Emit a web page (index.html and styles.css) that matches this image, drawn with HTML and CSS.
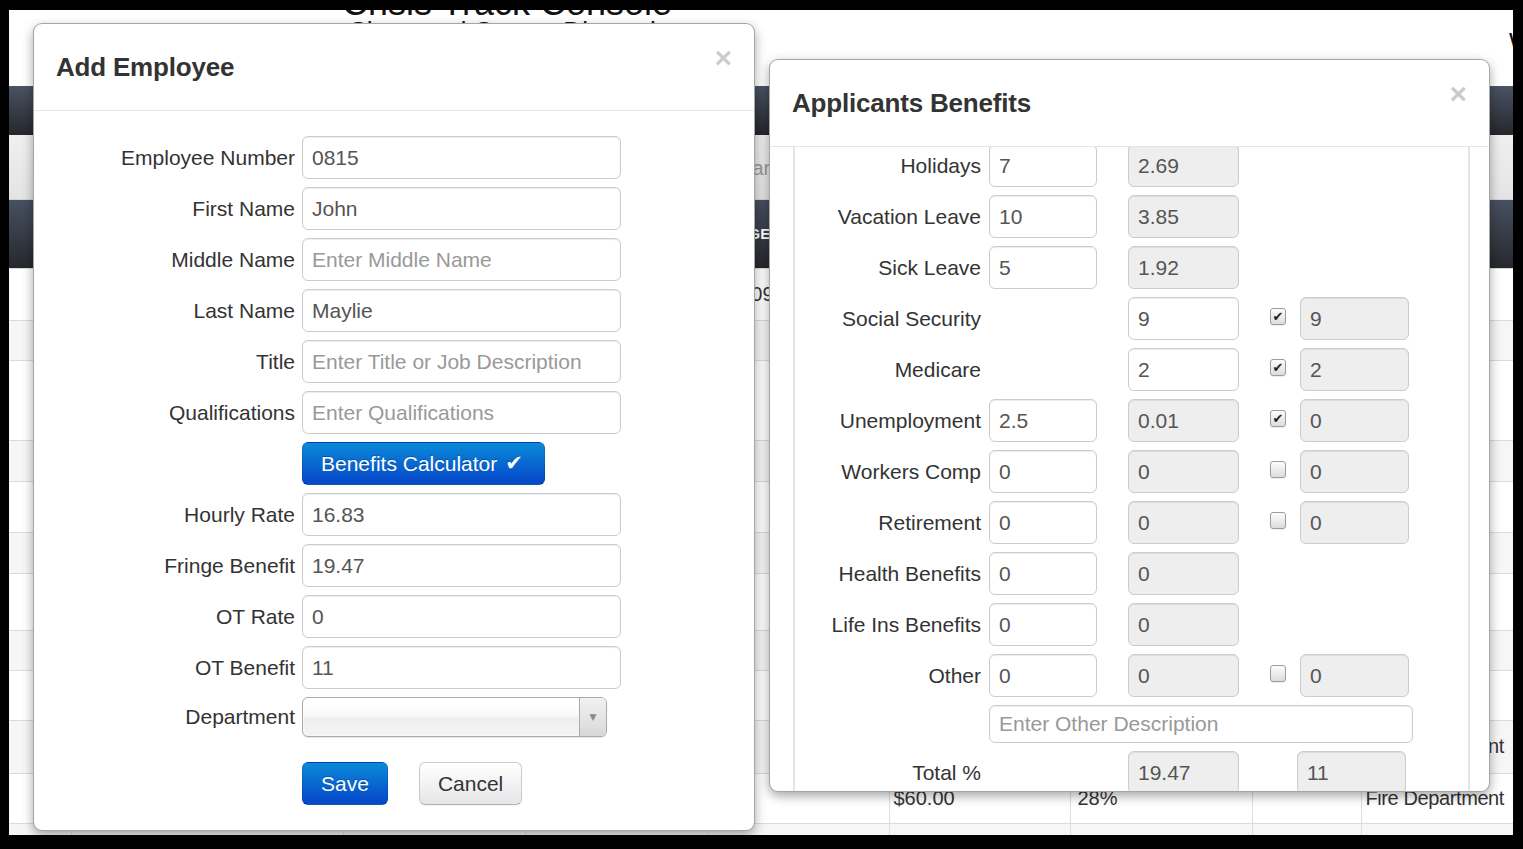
FILE: index.html
```html
<!DOCTYPE html>
<html>
<head>
<meta charset="utf-8">
<title>Crisis Track Console</title>
<link rel="stylesheet" href="styles.css">
</head>
<body>
<div class="screen">
  <div class="page">
    <header class="site-head">
      <div class="brand-block">
        <div class="brand">Crisis Track Console</div>
        <div class="sub">Sherwood County Dispatch</div>
      </div>
      <div class="user">Welcome</div>
    </header>
    <nav class="navbar"></nav>
    <div class="toolbar"><span class="search">Search</span></div>
    <table class="grid">
      <colgroup>
        <col class="w1"><col class="w2"><col class="w3"><col class="w4"><col class="w5"><col class="w6"><col class="w7"><col class="w8"><col class="w9">
      </colgroup>
      <thead>
        <tr><th></th><th>NAME</th><th>TITLE</th><th>DATE</th><th>RANGE</th><th>RATE</th><th>FRINGE</th><th></th><th>DEPARTMENT</th></tr>
      </thead>
      <tbody>
        <tr><td></td><td></td><td></td><td></td><td>12/09/15</td><td></td><td></td><td></td><td></td></tr>
        <tr><td></td><td></td><td></td><td></td><td></td><td></td><td></td><td></td><td></td></tr>
        <tr><td></td><td></td><td></td><td></td><td></td><td></td><td></td><td></td><td></td></tr>
        <tr><td></td><td></td><td></td><td></td><td></td><td></td><td></td><td></td><td></td></tr>
        <tr><td></td><td></td><td></td><td></td><td></td><td></td><td></td><td></td><td></td></tr>
        <tr><td></td><td></td><td></td><td></td><td></td><td></td><td></td><td></td><td></td></tr>
        <tr><td></td><td></td><td></td><td></td><td></td><td></td><td></td><td></td><td></td></tr>
        <tr><td></td><td></td><td></td><td></td><td></td><td></td><td></td><td></td><td></td></tr>
        <tr><td></td><td></td><td></td><td></td><td></td><td></td><td></td><td></td><td></td></tr>
        <tr><td></td><td></td><td></td><td></td><td></td><td></td><td></td><td></td><td>Fire Department</td></tr>
        <tr><td></td><td></td><td></td><td></td><td></td><td>$60.00</td><td>28%</td><td></td><td>Fire Department</td></tr>
        <tr><td></td><td></td><td></td><td></td><td></td><td></td><td></td><td></td><td></td></tr>
      </tbody>
    </table>
  </div>

  <div class="modal modal-left">
    <div class="modal-head">
      <h3>Add Employee</h3>
      <span class="close">&times;</span>
    </div>
    <form class="emp-form">
      <div class="form-row"><label>Employee Number</label><input class="field" type="text" value="0815"></div>
      <div class="form-row"><label>First Name</label><input class="field" type="text" value="John"></div>
      <div class="form-row"><label>Middle Name</label><input class="field" type="text" placeholder="Enter Middle Name"></div>
      <div class="form-row"><label>Last Name</label><input class="field" type="text" value="Maylie"></div>
      <div class="form-row"><label>Title</label><input class="field" type="text" placeholder="Enter Title or Job Description"></div>
      <div class="form-row"><label>Qualifications</label><input class="field" type="text" placeholder="Enter Qualifications"></div>
      <div class="form-row"><label></label><button type="button" class="btn btn-primary btn-calc">Benefits Calculator <span class="tick">&#10004;</span></button></div>
      <div class="form-row"><label>Hourly Rate</label><input class="field" type="text" value="16.83"></div>
      <div class="form-row"><label>Fringe Benefit</label><input class="field" type="text" value="19.47"></div>
      <div class="form-row"><label>OT Rate</label><input class="field" type="text" value="0"></div>
      <div class="form-row"><label>OT Benefit</label><input class="field" type="text" value="11"></div>
      <div class="form-row form-row-select"><label>Department</label>
        <div class="chosen"><span class="chosen-text"></span><span class="chosen-arrow"><span class="caret">&#9660;</span></span></div>
      </div>
      <div class="actions">
        <button type="button" class="btn btn-primary">Save</button>
        <button type="button" class="btn btn-default">Cancel</button>
      </div>
    </form>
  </div>

  <div class="modal modal-right">
    <div class="modal-head">
      <h3>Applicants Benefits</h3>
      <span class="close">&times;</span>
    </div>
    <div class="calc-body">
      <div class="calc">
        <div class="calc-rows">
          <div class="brow"><label>Holidays</label><input class="num g2" value="7"><input class="num ro g3" value="2.69" readonly></div>
          <div class="brow"><label>Vacation Leave</label><input class="num g2" value="10"><input class="num ro g3" value="3.85" readonly></div>
          <div class="brow"><label>Sick Leave</label><input class="num g2" value="5"><input class="num ro g3" value="1.92" readonly></div>
          <div class="brow"><label>Social Security</label><input class="num g3" value="9"><span class="cb g4 on">&#10004;</span><input class="num ro g5" value="9" readonly></div>
          <div class="brow"><label>Medicare</label><input class="num g3" value="2"><span class="cb g4 on">&#10004;</span><input class="num ro g5" value="2" readonly></div>
          <div class="brow"><label>Unemployment</label><input class="num g2" value="2.5"><input class="num ro g3" value="0.01" readonly><span class="cb g4 on">&#10004;</span><input class="num ro g5" value="0" readonly></div>
          <div class="brow"><label>Workers Comp</label><input class="num g2" value="0"><input class="num ro g3" value="0" readonly><span class="cb g4"></span><input class="num ro g5" value="0" readonly></div>
          <div class="brow"><label>Retirement</label><input class="num g2" value="0"><input class="num ro g3" value="0" readonly><span class="cb g4"></span><input class="num ro g5" value="0" readonly></div>
          <div class="brow"><label>Health Benefits</label><input class="num g2" value="0"><input class="num ro g3" value="0" readonly></div>
          <div class="brow"><label>Life Ins Benefits</label><input class="num g2" value="0"><input class="num ro g3" value="0" readonly></div>
          <div class="brow"><label>Other</label><input class="num g2" value="0"><input class="num ro g3" value="0" readonly><span class="cb g4"></span><input class="num ro g5" value="0" readonly></div>
          <div class="brow brow-desc"><input class="num desc" placeholder="Enter Other Description"></div>
          <div class="brow"><label>Total %</label><input class="num ro g3" value="19.47" readonly><input class="num ro g5 total3" value="11" readonly></div>
        </div>
      </div>
    </div>
  </div>
</div>
</body>
</html>
```

FILE: styles.css
```css
* { box-sizing: border-box; }
html, body { margin: 0; padding: 0; }
body {
  background: #000;
  width: 1523px;
  height: 849px;
  overflow: hidden;
  font-family: "Liberation Sans", Arial, "Helvetica Neue", sans-serif;
}
.screen {
  position: relative;
  width: 1523px;
  height: 849px;
  padding: 10px 10px 14px 9px;
}
.page {
  width: 1504px;
  height: 825px;
  background: #fff;
  overflow: hidden;
}

/* background page */
.site-head {
  height: 76px;
  display: flex;
  color: #111;
}
.brand-block {
  width: 996px;
  flex: none;
  text-align: center;
  white-space: nowrap;
}
.brand {
  font-size: 36px;
  line-height: 36px;
  margin-top: -25px;
}
.sub {
  font-size: 26px;
  line-height: 30px;
  margin-top: -5px;
}
.user {
  margin-left: 504px;
  padding-top: 18px;
  font-size: 24px;
  white-space: nowrap;
}
.navbar {
  height: 49px;
  background: linear-gradient(#4a5364, #25272b);
}
.toolbar {
  height: 65px;
  background: linear-gradient(#efefef, #e4e4e4);
  border-bottom: 1px solid #d0d0d0;
  padding: 22px 0 0 719px;
}
.search {
  font-size: 20px;
  color: #999;
}
.grid {
  width: 1504px;
  border-collapse: collapse;
  table-layout: fixed;
  font-size: 20px;
  color: #333;
}
.w1 { width: 62px; }
.w2 { width: 272px; }
.w3 { width: 182px; }
.w4 { width: 183px; }
.w5 { width: 181px; }
.w6 { width: 181px; }
.w7 { width: 182px; }
.w8 { width: 109px; }
.w9 { width: 152px; }
.grid th {
  height: 68px;
  background: linear-gradient(#475062, #26282c);
  color: #fff;
  font-size: 15px;
  font-weight: bold;
  text-align: left;
  padding: 0 8px;
  white-space: nowrap;
  overflow: hidden;
}
.grid td {
  border-top: 1px solid #dedbd6;
  border-left: 1px solid #dedede;
  padding: 0 4px;
  white-space: nowrap;
  overflow: hidden;
  vertical-align: middle;
}
.grid td:first-child { border-left: none; }
.grid tbody tr:nth-child(even) td { background: #f6f6f6; }
.grid tbody tr:nth-child(1) { height: 52px; }
.grid tbody tr:nth-child(2) { height: 40px; }
.grid tbody tr:nth-child(3) { height: 80px; }
.grid tbody tr:nth-child(4) { height: 41px; }
.grid tbody tr:nth-child(5) { height: 51px; }
.grid tbody tr:nth-child(6) { height: 41px; }
.grid tbody tr:nth-child(7) { height: 57px; }
.grid tbody tr:nth-child(8) { height: 40px; }
.grid tbody tr:nth-child(9) { height: 50px; }
.grid tbody tr:nth-child(10) { height: 53px; }
.grid tbody tr:nth-child(11) { height: 50px; }
.grid tbody tr:nth-child(12) { height: 50px; }
.grid tbody tr:nth-child(1) td:nth-child(5) { padding-left: 15px; }
.grid td:nth-child(7) { padding-left: 7px; }
.grid td:nth-child(9) { letter-spacing: -0.4px; }

/* modals */
.modal {
  position: absolute;
  background: #fff;
  border: 1px solid rgba(0, 0, 0, 0.35);
  border-radius: 9px;
  box-shadow: 0 4px 11px rgba(0, 0, 0, 0.35);
  overflow: hidden;
  color: #333;
}
.modal-left { left: 33px; top: 23px; width: 722px; height: 808px; }
.modal-right { left: 769px; top: 59px; width: 721px; height: 733px; }
.modal-head {
  position: relative;
  height: 87px;
  border-bottom: 1px solid #e5e5e5;
  padding: 0 22px;
  display: flex;
  align-items: center;
}
.modal-head h3 {
  margin: 0;
  font-size: 26px;
  font-weight: bold;
  color: #333;
  letter-spacing: -0.2px;
}
.close {
  position: absolute;
  right: 22px;
  top: 19px;
  font-size: 30px;
  line-height: 30px;
  font-weight: bold;
  color: #000;
  opacity: 0.2;
}

/* left form */
.emp-form {
  margin: 0;
  padding-top: 25px;
}
.form-row {
  display: flex;
  align-items: center;
  height: 43px;
  margin-bottom: 8px;
}
.form-row label {
  width: 261px;
  flex: none;
  margin-right: 7px;
  text-align: right;
  font-size: 21px;
  color: #333;
  white-space: nowrap;
}
input {
  font-family: "Liberation Sans", Arial, sans-serif;
  font-size: 21px;
  color: #555;
  background: #fff;
  border: 1px solid #ccc;
  border-radius: 6px;
  box-shadow: inset 0 1px 1px rgba(0, 0, 0, 0.075);
  padding: 0 9px;
  margin: 0;
  outline: none;
}
input::placeholder { color: #999; opacity: 1; }
.field {
  width: 319px;
  height: 43px;
}
.btn {
  height: 43px;
  padding: 0 18px;
  border-radius: 6px;
  font-family: "Liberation Sans", Arial, sans-serif;
  font-size: 21px;
  border: 1px solid;
  cursor: pointer;
}
.btn-primary {
  color: #fff;
  background: linear-gradient(#0a8ad8, #0646c9);
  border-color: rgba(0, 0, 0, 0.1) rgba(0, 0, 0, 0.1) rgba(0, 0, 0, 0.25);
  text-shadow: 0 -1px 0 rgba(0, 0, 0, 0.25);
}
.btn-default {
  color: #333;
  background: linear-gradient(#ffffff, #e6e6e6);
  border-color: #ccc #ccc #b3b3b3;
  box-shadow: inset 0 1px 0 rgba(255, 255, 255, 0.2), 0 1px 2px rgba(0, 0, 0, 0.05);
}
.btn-calc {
  width: 243px;
  text-align: left;
  display: flex;
  align-items: center;
}
.tick {
  font-family: "DejaVu Sans", sans-serif;
  font-size: 21px;
  margin-left: 8px;
  line-height: 1;
}
.form-row-select { height: 40px; }
.chosen {
  width: 305px;
  height: 40px;
  border: 1px solid #aaa;
  border-radius: 6px;
  background: linear-gradient(#ffffff 20%, #f6f6f6 50%, #eeeeee 52%, #f4f4f4 100%);
  box-shadow: 0 0 3px #fff inset, 0 1px 1px rgba(0, 0, 0, 0.1);
  display: flex;
  justify-content: flex-end;
  overflow: hidden;
}
.chosen-arrow {
  width: 27px;
  border-left: 1px solid #aaa;
  background: linear-gradient(#f2f2f2, #d8d8d8);
  display: flex;
  align-items: center;
  justify-content: center;
}
.caret {
  font-family: "DejaVu Sans", sans-serif;
  font-size: 9px;
  color: #888;
}
.actions {
  display: flex;
  gap: 31px;
  margin-left: 268px;
  padding-top: 17px;
}

/* right benefits */
.calc-body {
  height: 644px;
  padding: 0 19px 0 23px;
  overflow: hidden;
}
.calc {
  height: 100%;
  border-left: 2px solid #e4e4e4;
  border-right: 2px solid #e4e4e4;
  overflow: hidden;
}
.calc-rows {
  margin-top: -3px;
}
.brow {
  display: grid;
  grid-template-columns: 194px 139px 142px 30px 109px;
  align-items: center;
  height: 43px;
  margin-bottom: 8px;
}
.brow label {
  grid-column: 1;
  text-align: right;
  padding-right: 8px;
  font-size: 21px;
  color: #333;
  white-space: nowrap;
}
.num { height: 43px; }
.g2 { grid-column: 2; width: 108px; }
.g3 { grid-column: 3; width: 111px; }
.g4 { grid-column: 4; }
.g5 { grid-column: 5; width: 109px; }
.ro {
  background: #eee;
  color: #555;
}
.total3 { margin-left: -3px; }
.brow-desc { height: 38px; }
.desc {
  grid-column: 2 / 6;
  width: 424px;
  height: 38px;
}
.cb {
  width: 16px;
  height: 17px;
  margin-top: -4px;
  border: 1px solid #9c9c9c;
  border-radius: 3px;
  background: linear-gradient(#fdfdfd, #dcdcdc);
  box-shadow: 0 1px 1px rgba(0, 0, 0, 0.08);
  display: flex;
  align-items: center;
  justify-content: center;
  font-family: "DejaVu Sans", sans-serif;
  font-size: 13px;
  color: #222;
  line-height: 1;
}
```
